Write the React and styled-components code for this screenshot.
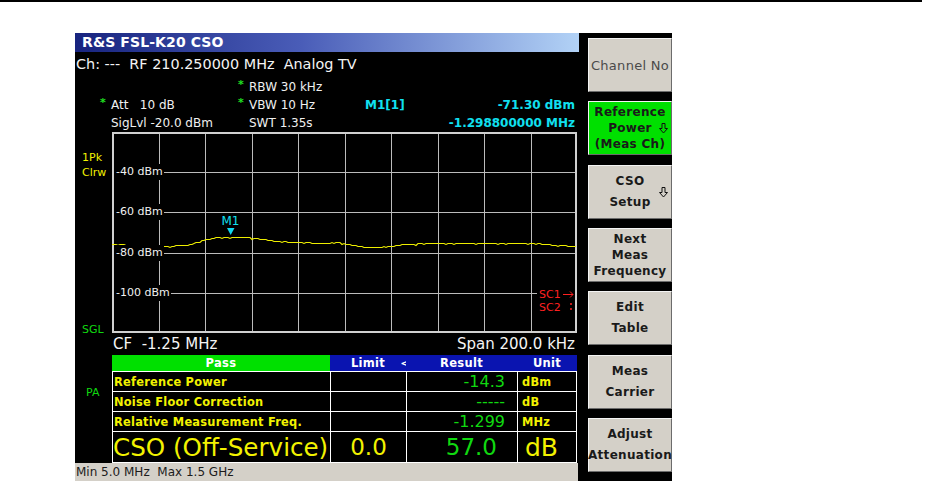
import styled, { createGlobalStyle } from "styled-components";

const GlobalStyle = createGlobalStyle`
  html, body { margin: 0; padding: 0; background: #fff; }
  body { font-family: "DejaVu Sans", Verdana, sans-serif; }
`;

const YELLOW = "#f2f200";
const GREEN = "#10d810";
const CYAN = "#10e0f0";

const Page = styled.div`
  width: 925px;
  height: 481px;
  overflow: hidden;
`;
const TopRule = styled.div`
  width: 922px;
  height: 2px;
  background: #000;
`;
const Screen = styled.div`
  margin: 31px 0 0 75px;
  width: 597px;
  height: 448px;
  background: #000;
  display: flex;
`;
const Main = styled.div`
  width: 504px;
  display: flex;
  flex-direction: column;
`;
const TitleBar = styled.div`
  height: 19px;
  line-height: 19px;
  padding-left: 7px;
  color: #fff;
  font-size: 14px;
  font-weight: bold;
  letter-spacing: 0.1px;
  background: linear-gradient(90deg, #18247f 0%, #4a5db8 45%, #b2d2f6 100%);
`;
const ChLine = styled.div`
  height: 24px;
  line-height: 24px;
  padding-left: 1px;
  color: #f4f4f4;
  font-size: 14.4px;
  white-space: pre;
`;
const Settings = styled.div`
  height: 56px;
  box-sizing: border-box;
  padding: 2px 4px 0 25px;
  display: grid;
  grid-template-columns: 138px 127px 1fr;
  grid-template-rows: repeat(3, 18px);
  font-size: 12px;
  color: #f0f0f0;
`;
const Setting = styled.div`
  display: flex;
  align-items: center;
  white-space: pre;
`;
const Star = styled.span`
  width: 11px;
  color: #20e020;
  font-weight: bold;
  font-size: 11px;
  position: relative;
  top: -3px;
`;
const MarkerInfo = styled.div`
  display: flex;
  align-items: center;
  justify-content: ${(p) => (p.$right ? "flex-end" : "space-between")};
  color: ${CYAN};
  font-weight: bold;
  font-size: 12px;
  white-space: pre;
`;
const GraphRow = styled.div`
  height: 201px;
  display: flex;
`;
const LeftRail = styled.div`
  width: 37px;
  box-sizing: border-box;
  padding: ${(p) => p.$pad || "18px 0 0 7px"};
  display: flex;
  flex-direction: column;
  font-size: 11px;
`;
const RailTag = styled.div`
  line-height: 15px;
  color: ${(p) => p.$color};
  margin-top: ${(p) => (p.$bottom ? "auto" : "0")};
  margin-bottom: ${(p) => (p.$bottom ? "-4px" : "0")};
`;
const ChartBox = styled.div`
  position: relative;
  width: 465px;
  height: 201px;
`;
const LevelLabel = styled.span`
  position: absolute;
  left: 2px;
  top: ${(p) => p.$y - 8}px;
  padding: 0 1px 0 2px;
  background: #000;
  color: #f0f0f0;
  font-size: 11px;
  line-height: 16px;
`;
const FooterLine = styled.div`
  height: 22px;
  line-height: 22px;
  padding: 0 4px 0 38px;
  display: flex;
  justify-content: space-between;
  color: #f4f4f4;
  font-size: 15px;
  white-space: pre;
`;
const TableRow = styled.div`
  height: 108px;
  display: flex;
`;
const ResultTable = styled.div`
  width: 465px;
  display: flex;
  flex-direction: column;
`;
const HeadRow = styled.div`
  height: 17px;
  box-sizing: border-box;
  border-bottom: 1px solid #fff;
  display: grid;
  grid-template-columns: 218px 76px 111px 60px;
  color: #fff;
  font-size: 11.5px;
  font-weight: bold;
  letter-spacing: 0.3px;
  line-height: 16px;
`;
const HeadCell = styled.div`
  position: relative;
  text-align: center;
  background: ${(p) => (p.$pass ? "#00e000" : "#0a14b0")};
`;
const LessThan = styled.span`
  position: absolute;
  right: -6px;
  top: 0;
  font-size: 14px;
  font-weight: normal;
`;
const BodyRow = styled.div`
  height: ${(p) => p.$h}px;
  box-sizing: border-box;
  border-left: 1px solid #fff;
  border-bottom: 1px solid #fff;
  display: grid;
  grid-template-columns: 218px 76px 111px 59px;
`;
const Cell = styled.div`
  box-sizing: border-box;
  border-right: 1px solid #fff;
  display: flex;
  align-items: center;
  justify-content: ${(p) => p.$align || "flex-start"};
  padding: ${(p) => p.$pad || "0"};
  color: ${(p) => p.$color || YELLOW};
  font-size: ${(p) => p.$size || 11.4}px;
  font-weight: ${(p) => (p.$bold ? "bold" : "normal")};
  letter-spacing: ${(p) => (p.$bold ? "0.25px" : "0")};
  white-space: nowrap;
  overflow: hidden;
`;
const StatusBar = styled.div`
  width: 503px;
  height: 18px;
  line-height: 18px;
  padding-left: 1px;
  box-sizing: border-box;
  background: #d4d0c8;
  color: #1c1c1c;
  font-size: 12px;
  white-space: pre;
`;
const Softkeys = styled.div`
  width: 93px;
  box-sizing: border-box;
  padding: 5px 0 0 9px;
  display: flex;
  flex-direction: column;
  gap: 9.33px;
`;
const Softkey = styled.div`
  position: relative;
  height: 54px;
  box-sizing: border-box;
  border: 1px solid;
  border-color: #f4f4f4 #6c6c6c #6c6c6c #f4f4f4;
  background: ${(p) => (p.$active ? "#00e000" : "#d4d0c8")};
  color: ${(p) => (p.$plain ? "#4a4a4a" : "#1a1a1a")};
  font-size: ${(p) => (p.$plain ? 13 : 12)}px;
  font-weight: ${(p) => (p.$plain ? "normal" : "bold")};
  line-height: ${(p) => (p.$dense ? 16 : 21)}px;
  letter-spacing: 0.3px;
  display: flex;
  flex-direction: column;
  align-items: center;
  justify-content: center;
  text-align: center;
  white-space: nowrap;
`;
const DownArrow = styled.svg`
  position: absolute;
  right: 3px;
  top: 50%;
  margin-top: -5px;
`;

const KNOTS = [
  [0, 112], [25, 113], [58, 113.7], [75, 113], [91, 108], [105, 105.3],
  [118, 104.5], [138, 105.3], [158, 108], [185, 110.3], [218, 110.7],
  [225, 109.7], [241, 113], [258, 115.3], [275, 114.3], [291, 112.3],
  [308, 111.3], [358, 110.7], [388, 111], [425, 111], [441, 112.7], [465, 114],
];

function traceAt(x) {
  for (let i = 1; i < KNOTS.length; i++) {
    const [x1, y1] = KNOTS[i];
    const [x0, y0] = KNOTS[i - 1];
    if (x <= x1) return y0 + ((x - x0) / (x1 - x0)) * (y1 - y0);
  }
  return KNOTS[KNOTS.length - 1][1];
}

// stepped trace: rounded to whole pixels with an occasional 1px blip
const tracePoints = [];
for (let x = 0; x <= 465; x += 2) {
  const blip = Math.sin(x * 2.3) > 0.93 ? 1 : 0;
  const y = Math.round(traceAt(x)) + blip + 0.5;
  tracePoints.push(`${x},${y}`);
}

const GRID_W = 465;
const GRID_H = 201;
const levels = ["-40 dBm", "-60 dBm", "-80 dBm", "-100 dBm"];

const Chart = () => (
  <ChartBox>
    <svg width={GRID_W} height={GRID_H} style={{ display: "block" }}>
      {Array.from({ length: 9 }, (_, i) => {
        const x = Math.round(46.5 * (i + 1)) + 0.5;
        return <line key={"v" + i} x1={x} y1={0} x2={x} y2={GRID_H} stroke="#bcbcbc" strokeWidth="1" />;
      })}
      {Array.from({ length: 4 }, (_, i) => {
        const y = Math.round(40.2 * (i + 1)) + 0.5;
        return <line key={"h" + i} x1={0} y1={y} x2={GRID_W} y2={y} stroke="#bcbcbc" strokeWidth="1" />;
      })}
      <rect x="1" y="1" width={GRID_W - 2} height={GRID_H - 2} fill="none" stroke="#d0d0d0" strokeWidth="2" />
      <polyline points={tracePoints.join(" ")} fill="none" stroke="#eeee00" strokeWidth="1.1" />
      <polygon points="115,96 122.5,96 118.7,103" fill="#10d8f0" />
      <text x="118.5" y="93" fill={CYAN} fontSize="12" textAnchor="middle" fontFamily="DejaVu Sans">M1</text>
      <rect x="425" y="155" width="38" height="27" fill="#000" />
      <text x="427" y="166" fill="#ff2020" fontSize="11" fontFamily="DejaVu Sans">SC1</text>
      <text x="427" y="179" fill="#ff2020" fontSize="11" fontFamily="DejaVu Sans">SC2</text>
      <path d="M451 162.5 H461 M458 159.5 L461 162.5 L458 165.5" stroke="#ff2020" strokeWidth="1" fill="none" />
      <path d="M459 171 V173 M459 176 V178" stroke="#ff2020" strokeWidth="1.5" />
    </svg>
    {levels.map((l, i) => (
      <LevelLabel key={l} $y={Math.round(40.2 * (i + 1))}>{l}</LevelLabel>
    ))}
  </ChartBox>
);

const Arrow = () => (
  <DownArrow width="9" height="11" viewBox="0 0 9 11">
    <path d="M3 0.5 H6 V5.5 H8.5 L4.5 10 L0.5 5.5 H3 Z" fill="none" stroke="#111" strokeWidth="1" />
  </DownArrow>
);

const softkeys = [
  { lines: ["Channel No"], plain: true },
  { lines: ["Reference", "Power", "(Meas Ch)"], active: true, dense: true, arrow: true },
  { lines: ["CSO", "Setup"], arrow: true },
  { lines: ["Next", "Meas", "Frequency"], dense: true },
  { lines: ["Edit", "Table"] },
  { lines: ["Meas", "Carrier"] },
  { lines: ["Adjust", "Attenuation"] },
];

const rows = [
  { label: "Reference Power", result: "-14.3", unit: "dBm" },
  { label: "Noise Floor Correction", result: "-----", unit: "dB" },
  { label: "Relative Measurement Freq.", result: "-1.299", unit: "MHz" },
];

export default function App() {
  return (
    <Page>
      <GlobalStyle />
      <TopRule />
      <Screen>
        <Main>
          <TitleBar>R&amp;S FSL-K20 CSO</TitleBar>
          <ChLine>{"Ch: ---  RF 210.250000 MHz  Analog TV"}</ChLine>
          <Settings>
            <Setting />
            <Setting><Star>*</Star>RBW 30 kHz</Setting>
            <Setting />
            <Setting><Star>*</Star>Att   10 dB</Setting>
            <Setting><Star>*</Star>VBW 10 Hz</Setting>
            <MarkerInfo><span>M1[1]</span><span>-71.30 dBm</span></MarkerInfo>
            <Setting><Star />SigLvl -20.0 dBm</Setting>
            <Setting><Star />SWT 1.35s</Setting>
            <MarkerInfo $right>-1.298800000 MHz</MarkerInfo>
          </Settings>
          <GraphRow>
            <LeftRail>
              <RailTag $color={YELLOW}>1Pk</RailTag>
              <RailTag $color={YELLOW}>Clrw</RailTag>
              <RailTag $color={GREEN} $bottom>SGL</RailTag>
            </LeftRail>
            <Chart />
          </GraphRow>
          <FooterLine>
            <span>{"CF  -1.25 MHz"}</span>
            <span>Span 200.0 kHz</span>
          </FooterLine>
          <TableRow>
            <LeftRail $pad="30px 0 0 11px">
              <RailTag $color={GREEN}>PA</RailTag>
            </LeftRail>
            <ResultTable>
              <HeadRow>
                <HeadCell $pass>Pass</HeadCell>
                <HeadCell>Limit<LessThan>&lt;</LessThan></HeadCell>
                <HeadCell>Result</HeadCell>
                <HeadCell>Unit</HeadCell>
              </HeadRow>
              {rows.map((r) => (
                <BodyRow key={r.label} $h={20}>
                  <Cell $bold $pad="0 0 0 1px">{r.label}</Cell>
                  <Cell />
                  <Cell $align="flex-end" $pad="0 12px 0 0" $color={GREEN} $size={16}>{r.result}</Cell>
                  <Cell $bold $pad="0 0 0 4px">{r.unit}</Cell>
                </BodyRow>
              ))}
              <BodyRow $h={31}>
                <Cell $size={24.6} $pad="0 0 0 0">CSO (Off-Service)</Cell>
                <Cell $size={23} $align="center">0.0</Cell>
                <Cell $size={23} $align="flex-end" $pad="0 20px 0 0" $color={GREEN}>57.0</Cell>
                <Cell $size={25} $pad="0 0 0 7px">dB</Cell>
              </BodyRow>
            </ResultTable>
          </TableRow>
          <StatusBar>{"Min 5.0 MHz  Max 1.5 GHz"}</StatusBar>
        </Main>
        <Softkeys>
          {softkeys.map((k) => (
            <Softkey key={k.lines.join()} $active={k.active} $plain={k.plain} $dense={k.dense}>
              {k.lines.map((l) => (
                <span key={l}>{l}</span>
              ))}
              {k.arrow && <Arrow />}
            </Softkey>
          ))}
        </Softkeys>
      </Screen>
    </Page>
  );
}
